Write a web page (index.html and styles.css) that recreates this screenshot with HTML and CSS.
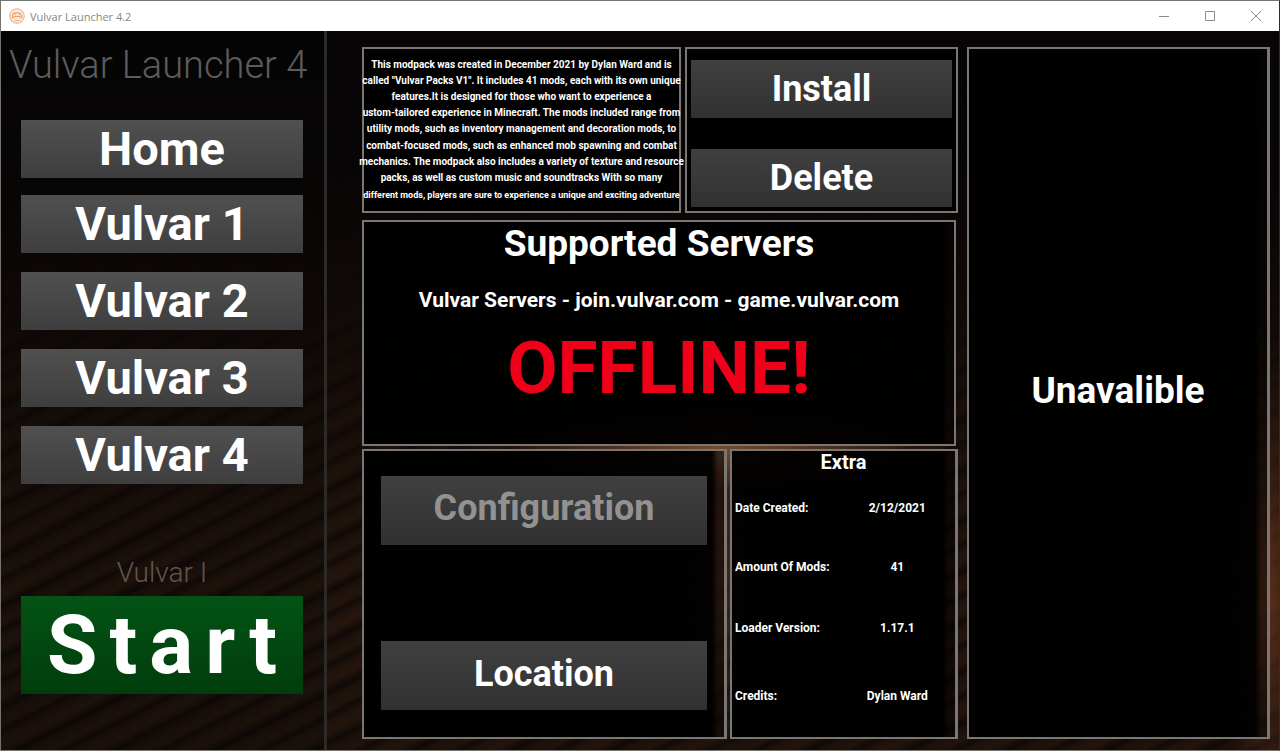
FILE: index.html
```html
<!DOCTYPE html>
<html lang="en">
<head>
<meta charset="utf-8">
<title>Vulvar Launcher 4.2</title>
<link rel="stylesheet" href="styles.css">
</head>
<body>
<div class="window">
  <header class="titlebar">
    <svg class="app-icon" viewBox="0 0 16 16" aria-hidden="true">
      <circle cx="8" cy="8" r="7.2" fill="#fdeee4" stroke="#eda277" stroke-width="1"/>
      <path d="M3.500 9.800C3.200 7 4.400 5 6 4.800L10 4.800C11.600 5 12.800 7 12.500 9.800C11.500 10 11 8.800 10 8.400L6 8.400C5 8.800 4.500 10 3.500 9.800Z" fill="none" stroke="#e9a077" stroke-width="1.200"/>
      <path d="M5.500 6.500h1.500M9.500 6.500h1.500M5 12.200q3 1 6 0" fill="none" stroke="#f0b08c" stroke-width="1"/>
    </svg>
    <span class="window-title">Vulvar Launcher 4.2</span>
    <button class="window-button" aria-label="Minimize"><svg viewBox="0 0 12 12"><path d="M1 6.500H11"/></svg></button>
    <button class="window-button" aria-label="Maximize"><svg viewBox="0 0 12 12"><path d="M1.500 1.500h9v9h-9z"/></svg></button>
    <button class="window-button" aria-label="Close"><svg viewBox="0 0 12 12"><path d="M1 1L11 11M11 1L1 11"/></svg></button>
  </header>
  <div class="content">
    <aside class="sidebar">
      <h1 class="brand">Vulvar Launcher 4</h1>
      <nav class="nav">
        <button class="button nav-button">Home</button>
        <button class="button nav-button">Vulvar 1</button>
        <button class="button nav-button">Vulvar 2</button>
        <button class="button nav-button">Vulvar 3</button>
        <button class="button nav-button">Vulvar 4</button>
      </nav>
      <div class="launch">
        <p class="selected-pack">Vulvar I</p>
        <button class="start-button">Start</button>
      </div>
    </aside>
    <main class="main">
      <div class="primary">
        <div class="row row-top">
          <section class="panel about">
            <p class="about-text">
              <span>This modpack was created in December 2021 by Dylan Ward and is</span>
              <span>called "Vulvar Packs V1". It includes 41 mods, each with its own unique</span>
              <span>features.It is designed for those who want to experience a</span>
              <span>ustom-tailored experience in Minecraft. The mods included range from</span>
              <span>utility mods, such as inventory management and decoration mods, to</span>
              <span class="about-spaced">combat-focused mods, such as enhanced mob spawning and combat</span>
              <span>mechanics. The modpack also includes a variety of texture and resource</span>
              <span>packs, as well as custom music and soundtracks With so many</span>
              <span class="about-spaced about-last">different mods, players are sure to experience a unique and exciting adventure</span>
            </p>
          </section>
          <section class="panel actions">
            <button class="button action-button">Install</button>
            <button class="button action-button">Delete</button>
          </section>
        </div>
        <section class="panel servers">
          <h2 class="heading">Supported Servers</h2>
          <p class="server-list">Vulvar Servers - join.vulvar.com - game.vulvar.com</p>
          <p class="status">OFFLINE!</p>
        </section>
        <div class="row row-bottom">
          <section class="panel tools">
            <button class="button tool-button" disabled>Configuration</button>
            <button class="button tool-button">Location</button>
          </section>
          <section class="panel extra">
            <h2 class="extra-title">Extra</h2>
            <dl class="facts">
              <dt>Date Created:</dt><dd>2/12/2021</dd>
              <dt>Amount Of Mods:</dt><dd>41</dd>
              <dt>Loader Version:</dt><dd>1.17.1</dd>
              <dt>Credits:</dt><dd>Dylan Ward</dd>
            </dl>
          </section>
        </div>
      </div>
      <section class="panel preview">
        <p class="heading">Unavalible</p>
      </section>
    </main>
  </div>
</div>
</body>
</html>
```
FILE: styles.css
```css
* { box-sizing: border-box; }

body {
  margin: 0;
  font-family: Roboto, "Liberation Sans", sans-serif;
  font-weight: 700;
  color: #fff;
}

h1, h2, p, dl, dd { margin: 0; }

button {
  border: 0;
  padding: 0;
  font: inherit;
  color: inherit;
}

.window {
  display: flex;
  flex-direction: column;
  min-height: 100vh;
  border: 1px solid #77736f;
  border-right-color: #26302f;
  border-top-color: #6f7676;
}

.titlebar {
  display: flex;
  align-items: center;
  height: 30px;
  padding-left: 8px;
  background: #fff;
}

.app-icon { width: 16px; height: 16px; }

.window-title {
  flex: 1;
  margin-left: 5px;
  font: 400 11px "Open Sans", "Noto Sans", sans-serif;
  color: #858585;
}

.window-button {
  display: grid;
  place-items: center;
  width: 46px;
  height: 30px;
  background: none;
}

.window-button svg {
  width: 12px;
  height: 12px;
  fill: none;
  stroke: #8a8a8a;
}

.content {
  flex: 1;
  display: grid;
  grid-template-columns: 326fr 952fr;
  background:
    linear-gradient(180deg, #060405 0, #080506 18%, rgba(14, 8, 6, 0.95) 35%, rgba(14, 8, 6, 0.5) 56%, rgba(14, 8, 6, 0.15) 80%, rgba(14, 8, 6, 0.3)),
    radial-gradient(ellipse 230px 45px at 56% 58%, #d08850, rgba(160, 95, 55, 0.6) 60%, transparent),
    radial-gradient(ellipse 40px 260px at 56% 66%, rgba(120, 66, 36, 0.8), transparent),
    radial-gradient(ellipse 40px 260px at 99% 76%, rgba(130, 66, 34, 0.8), transparent),
    repeating-linear-gradient(153deg, #24160e 0, #2a190f 9px, #1c110b 14px, #100907 18px, #20130c 23px, #27180f 33px, #140b08 39px, #24160e 45px);
}

.sidebar {
  display: flex;
  flex-direction: column;
  padding: 11px 21px 56px 20px;
  border-right: 3px solid #2b2a29;
  background: rgba(4, 3, 5, 0.2);
}

.brand {
  margin: 0 -12px;
  font-size: 38px;
  font-weight: 300;
  line-height: 46px;
  white-space: nowrap;
  color: #5c5c5c;
}

.nav {
  display: flex;
  flex-direction: column;
  gap: 19px;
  margin-top: 32px;
}

.button {
  background: linear-gradient(#404040, #313131);
  text-align: center;
}

.nav-button {
  height: 58px;
  font-size: 47px;
  line-height: 58px;
  background: linear-gradient(#505050, #3e3e3e);
}

.nav-button:first-child { margin-bottom: -2px; }

.launch { margin-top: auto; }

.selected-pack {
  font-size: 28px;
  font-weight: 300;
  line-height: 34px;
  text-align: center;
  color: #62564f;
}

.start-button {
  display: block;
  width: 100%;
  height: 98px;
  margin-top: 6px;
  padding-left: 12px;
  font-size: 82px;
  line-height: 96px;
  letter-spacing: 12px;
  background: linear-gradient(#045315, #003d0c);
}

.main {
  display: grid;
  grid-template-columns: 596fr 303fr;
  gap: 9px;
  padding: 16px 9px 11px 35px;
}

.primary {
  display: grid;
  grid-template-rows: 166fr 231fr 291fr;
  gap: 3px;
}

.row { display: grid; }

.row-top {
  grid-template-columns: 319fr 273fr;
  gap: 4px;
}

.row-bottom {
  grid-template-columns: 365fr 228fr;
  gap: 3px;
}

.panel {
  min-width: 0;
  border: 2px solid #7a7674;
  background: linear-gradient(90deg, rgba(0, 0, 0, 0.95) calc(100% - 12px), rgba(0, 0, 0, 0.5) calc(100% - 6px));
}

.about { padding-top: 8px; background: #000; }

.about-text {
  display: flex;
  flex-direction: column;
  align-items: center;
  font-size: 10px;
  line-height: 16px;
  white-space: nowrap;
}

.about-spaced { margin-top: 1px; }

.about-last { font-size: 9px; }

.actions {
  display: flex;
  flex-direction: column;
  justify-content: space-between;
  padding: 11px 4px 4px;
  background: #000;
}

.action-button {
  height: 58px;
  font-size: 36px;
  line-height: 56px;
}

.servers {
  margin: 4px 2px 0 0;
  text-align: center;
}

.heading {
  font-size: 37px;
  line-height: 44px;
}

.server-list {
  margin-top: 22px;
  font-size: 21px;
  line-height: 24px;
}

.status {
  margin-top: 16px;
  font-size: 73px;
  line-height: 80px;
  color: #f00018;
}

.tools {
  display: flex;
  flex-direction: column;
  justify-content: space-between;
  padding: 25px 17px 27px;
}

.tools, .extra, .preview { border-right-width: 3px; }

.tool-button {
  height: 69px;
  padding-bottom: 4px;
  font-size: 36px;
}

.tool-button:disabled { color: #929292; }

.extra {
  display: flex;
  flex-direction: column;
  padding-bottom: 6px;
}

.extra-title {
  margin-bottom: 6px;
  font-size: 20px;
  line-height: 22px;
  text-align: center;
}

.facts {
  flex: 1;
  display: grid;
  grid-template-columns: 106fr 117fr;
  grid-template-rows: 58fr 58fr 64fr 70fr;
  align-items: center;
  padding-left: 3px;
  font-size: 12px;
  line-height: 16px;
}

.facts dt { white-space: nowrap; }

.facts dd { text-align: center; }

.preview {
  display: grid;
  place-items: center;
  padding-bottom: 4px;
}
```
